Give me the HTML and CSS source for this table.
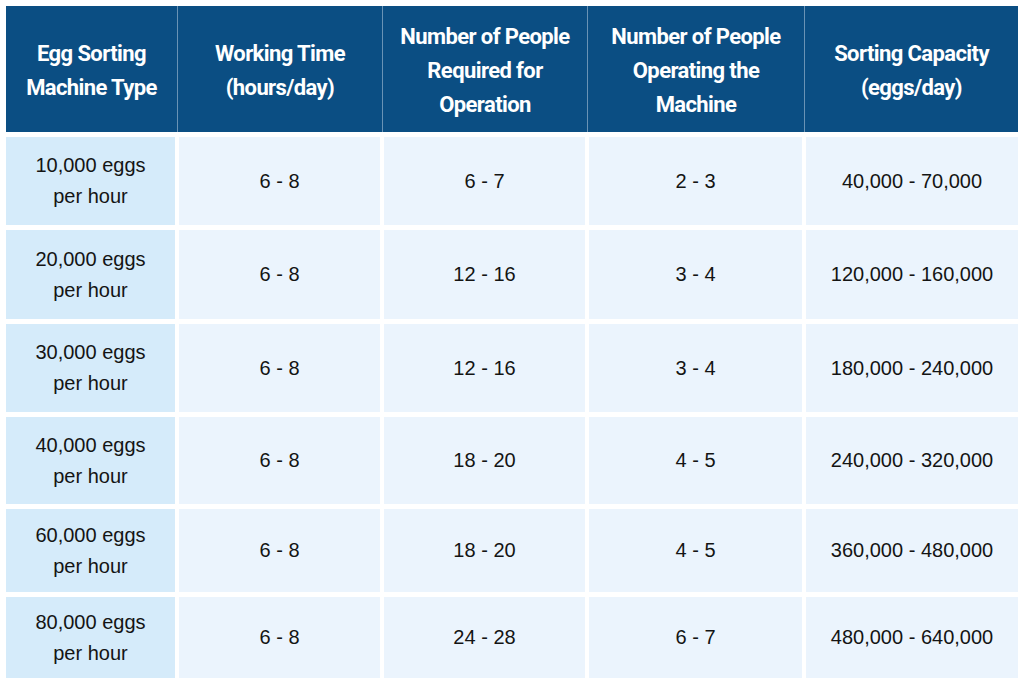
FILE: index.html
```html
<!DOCTYPE html>
<html lang="en">
<head>
<meta charset="utf-8">
<title>Egg Sorting Machine Comparison</title>
<link rel="stylesheet" href="styles.css">
</head>
<body>
<div class="table">
  <div class="head">
    <div class="hcell">Egg Sorting<br>Machine Type</div>
    <div class="hcell">Working Time<br>(hours/day)</div>
    <div class="hcell">Number of People<br>Required for<br>Operation</div>
    <div class="hcell">Number of People<br>Operating the<br>Machine</div>
    <div class="hcell">Sorting Capacity<br>(eggs/day)</div>
  </div>
  <div class="body">
    <div class="row">
      <div class="cell type">10,000 eggs<br>per hour</div>
      <div class="cell">6 - 8</div>
      <div class="cell">6 - 7</div>
      <div class="cell">2 - 3</div>
      <div class="cell">40,000 - 70,000</div>
    </div>
    <div class="row">
      <div class="cell type">20,000 eggs<br>per hour</div>
      <div class="cell">6 - 8</div>
      <div class="cell">12 - 16</div>
      <div class="cell">3 - 4</div>
      <div class="cell">120,000 - 160,000</div>
    </div>
    <div class="row">
      <div class="cell type">30,000 eggs<br>per hour</div>
      <div class="cell">6 - 8</div>
      <div class="cell">12 - 16</div>
      <div class="cell">3 - 4</div>
      <div class="cell">180,000 - 240,000</div>
    </div>
    <div class="row">
      <div class="cell type">40,000 eggs<br>per hour</div>
      <div class="cell">6 - 8</div>
      <div class="cell">18 - 20</div>
      <div class="cell">4 - 5</div>
      <div class="cell">240,000 - 320,000</div>
    </div>
    <div class="row">
      <div class="cell type">60,000 eggs<br>per hour</div>
      <div class="cell">6 - 8</div>
      <div class="cell">18 - 20</div>
      <div class="cell">4 - 5</div>
      <div class="cell">360,000 - 480,000</div>
    </div>
    <div class="row">
      <div class="cell type">80,000 eggs<br>per hour</div>
      <div class="cell">6 - 8</div>
      <div class="cell">24 - 28</div>
      <div class="cell">6 - 7</div>
      <div class="cell">480,000 - 640,000</div>
    </div>
  </div>
</div>
</body>
</html>
```

FILE: styles.css
```css
* { box-sizing: border-box; }

html, body {
  margin: 0;
  padding: 0;
  background: #ffffff;
}

body {
  font-family: "Liberation Sans", Arial, sans-serif;
  color: #141414;
}

.table {
  padding: 6px 6px 0 6px;
  display: flex;
  flex-direction: column;
  gap: 5px;
}

.head {
  display: grid;
  grid-template-columns: 171px 205px 205px 217px 214px;
  height: 126px;
  background: #0b4e83;
}

.hcell {
  display: flex;
  align-items: center;
  justify-content: center;
  text-align: center;
  padding-top: 3px;
  color: #ffffff;
  font-family: Roboto, "Noto Sans", "Liberation Sans", sans-serif;
  font-weight: 700;
  font-size: 22px;
  line-height: 34px;
  letter-spacing: -0.6px;
  border-left: 1px solid #6a93b5;
}

.hcell:first-child {
  border-left: none;
}

.body {
  display: grid;
  grid-template-rows: 88px 89px 88px 87px 83px 81px;
  row-gap: 5px;
}

.row {
  display: grid;
  grid-template-columns: 169px 201px 201px 213px 212px;
  column-gap: 4px;
}

.cell {
  display: flex;
  align-items: center;
  justify-content: center;
  text-align: center;
  font-size: 20px;
  line-height: 31px;
  background: #ebf4fd;
}

.cell.type {
  background: #d5ebfa;
}
```
